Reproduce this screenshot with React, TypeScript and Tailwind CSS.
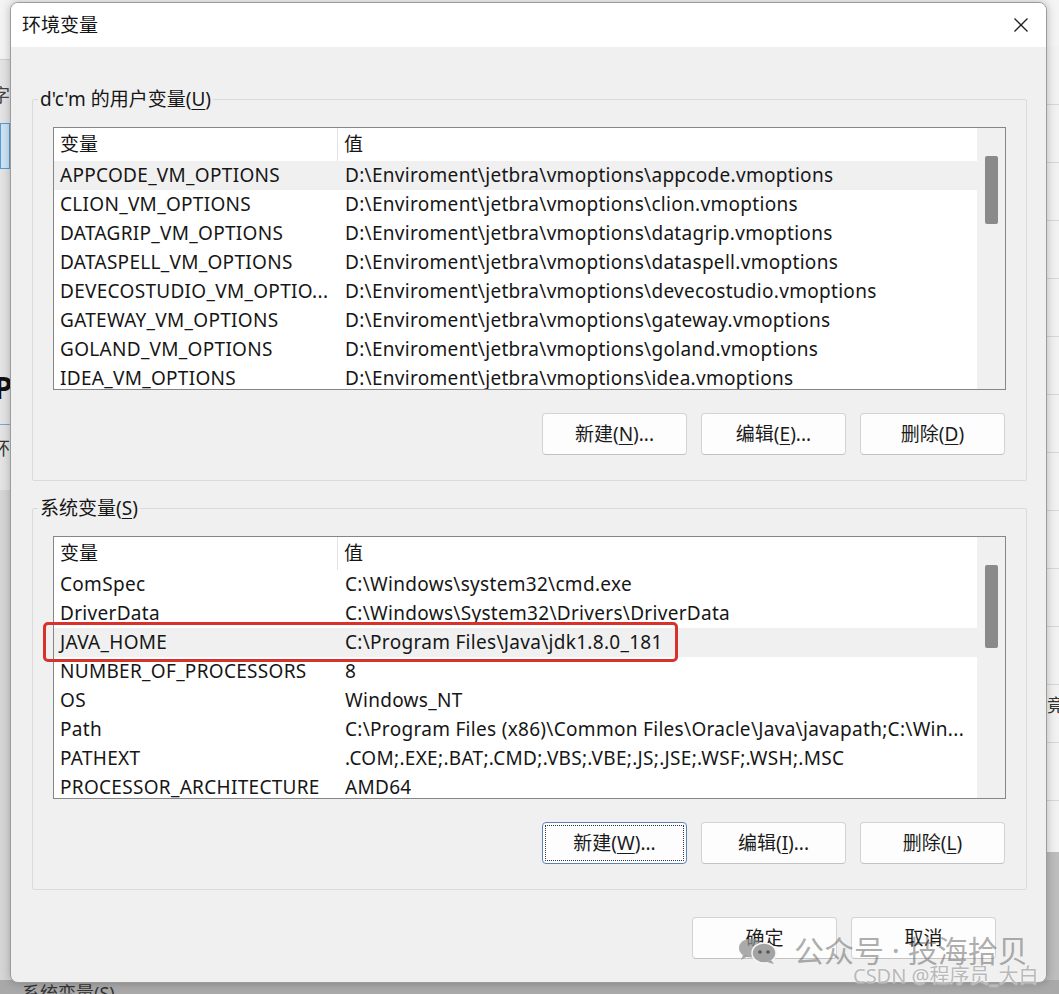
import React from "react";

type Row = [string, string];

const userVars: Row[] = [
  ["APPCODE_VM_OPTIONS", "D:\\Enviroment\\jetbra\\vmoptions\\appcode.vmoptions"],
  ["CLION_VM_OPTIONS", "D:\\Enviroment\\jetbra\\vmoptions\\clion.vmoptions"],
  ["DATAGRIP_VM_OPTIONS", "D:\\Enviroment\\jetbra\\vmoptions\\datagrip.vmoptions"],
  ["DATASPELL_VM_OPTIONS", "D:\\Enviroment\\jetbra\\vmoptions\\dataspell.vmoptions"],
  ["DEVECOSTUDIO_VM_OPTIO...", "D:\\Enviroment\\jetbra\\vmoptions\\devecostudio.vmoptions"],
  ["GATEWAY_VM_OPTIONS", "D:\\Enviroment\\jetbra\\vmoptions\\gateway.vmoptions"],
  ["GOLAND_VM_OPTIONS", "D:\\Enviroment\\jetbra\\vmoptions\\goland.vmoptions"],
  ["IDEA_VM_OPTIONS", "D:\\Enviroment\\jetbra\\vmoptions\\idea.vmoptions"],
];

const sysVars: Row[] = [
  ["ComSpec", "C:\\Windows\\system32\\cmd.exe"],
  ["DriverData", "C:\\Windows\\System32\\Drivers\\DriverData"],
  ["JAVA_HOME", "C:\\Program Files\\Java\\jdk1.8.0_181"],
  ["NUMBER_OF_PROCESSORS", "8"],
  ["OS", "Windows_NT"],
  ["Path", "C:\\Program Files (x86)\\Common Files\\Oracle\\Java\\javapath;C:\\Win..."],
  ["PATHEXT", ".COM;.EXE;.BAT;.CMD;.VBS;.VBE;.JS;.JSE;.WSF;.WSH;.MSC"],
  ["PROCESSOR_ARCHITECTURE", "AMD64"],
];

// mnemonic letter, underlined like the win32 accelerator
const Mn = ({ children }: { children: React.ReactNode }) => (
  <span className="underline decoration-1 underline-offset-[3px]">{children}</span>
);

const DlgButton = ({
  children,
  focused,
}: {
  children: React.ReactNode;
  focused?: boolean;
}) => (
  <button
    className={
      focused
        ? "h-[42px] w-[145px] rounded-[4px] border border-[#5f82b4] bg-[#fdfdfd] text-[#1b1b1b] outline-1 -outline-offset-4 outline-[#333] outline-dotted"
        : "h-[42px] w-[145px] rounded-[4px] border border-[#d3d3d3] border-b-[#c2c2c2] bg-[#fdfdfd] text-[#1b1b1b]"
    }
  >
    {children}
  </button>
);

const VarList = ({
  rows,
  highlight,
  thumbClass,
  children,
}: {
  rows: Row[];
  highlight: number;
  thumbClass: string;
  children?: React.ReactNode;
}) => (
  <div className="relative">
    <div className="flex h-[263px] overflow-hidden border border-[#868686] bg-white">
      <div className="min-w-0 flex-1">
        <div className="flex h-[33px]">
          <div className="flex w-[284px] items-center border-r border-[#e3e3e3] pl-[6px]">变量</div>
          <div className="flex items-center pl-[6px]">值</div>
        </div>
        {rows.map(([name, value], i) => (
          <div
            key={name}
            className={`flex h-[29px] items-center tracking-[0.3px] ${i === highlight ? "bg-[#f0f0f0]" : ""}`}
          >
            <div className="w-[285px] shrink-0 overflow-hidden whitespace-nowrap pl-[6px]">{name}</div>
            <div className="overflow-hidden whitespace-nowrap pl-[6px]">{value}</div>
          </div>
        ))}
      </div>
      <div className="w-[28px] shrink-0 bg-[#f0f0f0] pl-[8px] pt-[28px]">
        <div className={`w-[13px] rounded-[2px] bg-[#8a8a8a] ${thumbClass}`} />
      </div>
    </div>
    {children}
  </div>
);

const GroupBox = ({
  label,
  children,
}: {
  label: React.ReactNode;
  children: React.ReactNode;
}) => (
  <fieldset className="m-0 min-w-0 rounded-[2px] border border-[#dadada] p-0">
    <legend className="ml-[5px] px-[2px] leading-[26px]">{label}</legend>
    <div className="px-[20px] pb-[25px] pt-[15px]">{children}</div>
  </fieldset>
);

const WeChatIcon = () => (
  <svg width="40" height="26" viewBox="0 0 40 26">
    <ellipse cx="13" cy="10" rx="12" ry="9.5" fill="#8d8d8d" fillOpacity="0.75" />
    <path d="M5 17 L3 22 L10 18 Z" fill="#8d8d8d" fillOpacity="0.75" />
    <ellipse cx="26" cy="15" rx="12" ry="10" fill="#a3a3a3" stroke="#f5f5f5" strokeWidth="1.5" />
    <path d="M33 22 L36 26 L29 24 Z" fill="#a3a3a3" />
    <circle cx="22" cy="14" r="1.8" fill="#555" />
    <circle cx="30" cy="14" r="1.8" fill="#555" />
  </svg>
);

export default function App() {
  return (
    <div className="relative h-[994px] w-[1059px] overflow-hidden bg-[#e4e4e4] font-['Noto_Sans','Noto_Sans_CJK_SC',sans-serif] text-[19px] text-[#161616]">
      {/* window behind the dialog */}
      <div className="absolute inset-0">
        <div className="h-[60px] border-b border-[#cfcfcf] bg-[#f4f4f4]" />
        <div className="ml-[-8px] mt-[22px] text-[18px] text-[#444]">字</div>
        <div className="mt-[14px] h-[46px] w-[10px] border border-[#5b9bd5] bg-[#cfe3f6]" />
        <div className="ml-[-6px] mt-[196px] text-[30px] font-bold text-[#111]">Pa</div>
        <div className="mt-[14px] h-px w-[12px] bg-[#7aa7d6]" />
        <div className="ml-[-8px] mt-[10px] text-[18px] text-[#333]">环</div>
        <div className="absolute bottom-0 left-0 top-[490px] w-[12px] bg-[#d6d6d6]" />
        <div className="absolute right-0 top-[47px] flex w-[14px] flex-col bg-[#f2f2f2]">
          {Array.from({ length: 14 }).map((_, i) => (
            <div key={i} className="h-[58px] border-b border-[#d7d7d7]" />
          ))}
        </div>
        <div className="absolute right-[-6px] top-[692px] text-[18px] text-[#333]">竟</div>
        <div className="absolute bottom-0 right-0 top-[852px] w-[14px] bg-[#bdbdbd]" />
        <div className="absolute bottom-0 left-0 right-0 h-[14px] bg-[#a9a9a9] pl-[22px] text-[18px] leading-[26px] text-[#333]">
          系统变量(S)
        </div>
      </div>

      {/* dialog */}
      <div className="relative ml-[10px] mt-[2px] flex h-[981px] w-[1037px] flex-col overflow-hidden rounded-[8px] border border-[#9c9c9c] bg-[#f0f0f0] shadow-[0_0_10px_rgba(0,0,0,0.25)]">
        <div className="flex h-[44px] shrink-0 items-center justify-between bg-white pl-[11px] pr-[18px]">
          <span className="text-[19px]">环境变量</span>
          <svg width="14" height="14" viewBox="0 0 14 14">
            <path d="M0.5 0.5 L13.5 13.5 M13.5 0.5 L0.5 13.5" stroke="#1f1f1f" strokeWidth="1.3" />
          </svg>
        </div>

        <div className="flex flex-col pl-[21px] pr-[19px] pt-[39px]">
          <GroupBox
            label={
              <>
                d'c'm 的用户变量(<Mn>U</Mn>)
              </>
            }
          >
            <VarList rows={userVars} highlight={0} thumbClass="h-[68px]" />
            <div className="mr-[1px] mt-[23px] flex justify-end gap-[14px]">
              <DlgButton>
                新建(<Mn>N</Mn>)...
              </DlgButton>
              <DlgButton>
                编辑(<Mn>E</Mn>)...
              </DlgButton>
              <DlgButton>
                删除(<Mn>D</Mn>)
              </DlgButton>
            </div>
          </GroupBox>

          <div className="mt-[14px]">
            <GroupBox
              label={
                <>
                  系统变量(<Mn>S</Mn>)
                </>
              }
            >
              <VarList rows={sysVars} highlight={2} thumbClass="h-[83px]">
                <div className="absolute left-[-10px] top-[86px] h-[40px] w-[635px] rounded-[5px] border-[3px] border-[#d8322b]" />
              </VarList>
              <div className="mr-[1px] mt-[23px] flex justify-end gap-[14px]">
                <DlgButton focused>
                  新建(<Mn>W</Mn>)...
                </DlgButton>
                <DlgButton>
                  编辑(<Mn>I</Mn>)...
                </DlgButton>
                <DlgButton>
                  删除(<Mn>L</Mn>)
                </DlgButton>
              </div>
            </GroupBox>
          </div>

          <div className="mr-[31px] mt-[27px] flex justify-end gap-[14px]">
            <DlgButton>确定</DlgButton>
            <DlgButton>取消</DlgButton>
          </div>
        </div>
      </div>

      {/* article watermarks */}
      <div className="absolute left-[738px] top-[933px] flex items-center gap-[16px]">
        <WeChatIcon />
        <span className="text-[30px] leading-[36px] text-[rgba(105,105,105,0.55)]">公众号 · 技海拾贝</span>
      </div>
      <div className="absolute left-[853px] top-[963px] text-[20px] leading-[26px] text-[#b9b9b9] [text-shadow:0_0_2px_#fff]">
        CSDN @程序员_大白
      </div>
    </div>
  );
}
